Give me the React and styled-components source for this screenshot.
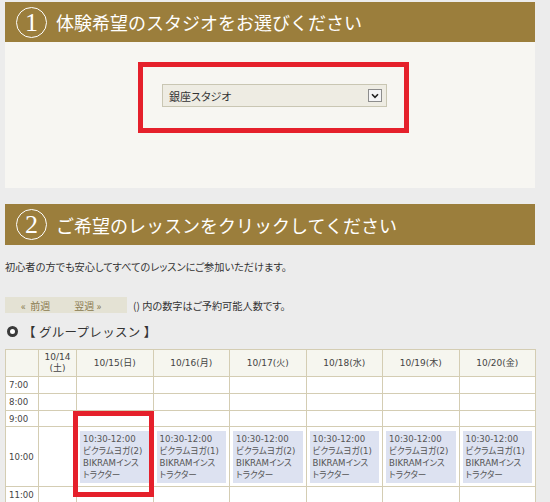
import React from "react";
import styled, { createGlobalStyle } from "styled-components";

const Global = createGlobalStyle`
  html, body { margin: 0; padding: 0; background: #ececec; }
  body { font-family: "Noto Sans CJK JP", sans-serif; color: #333; }
  * { box-sizing: border-box; }
`;

const Page = styled.div`
  width: 550px;
  padding: 2px 15px 0 5px;
`;

const SectionHeader = styled.div`
  display: flex;
  align-items: center;
  height: ${(p) => (p.$tall ? 41 : 40)}px;
  margin-top: ${(p) => p.$mt || 0}px;
  padding-left: 11px;
  background: #9b7e3c;
  color: #fff;
`;

const NumCircle = styled.span`
  display: flex;
  align-items: center;
  justify-content: center;
  width: 31px;
  height: 31px;
  border: 1.5px solid #fff;
  border-radius: 50%;
  font-family: "Liberation Serif", serif;
  font-size: 26px;
  line-height: 1;
  padding-top: 1px;
`;

const Title = styled.h2`
  margin: 0 0 0 9px;
  font-family: "Noto Sans CJK JP", sans-serif;
  font-weight: 400;
  font-size: 18px;
  letter-spacing: 0;
  line-height: 1;
`;

const StudioPanel = styled.div`
  height: 146px;
  padding: 20px 0 0 133px;
  background: #f7f6f2;
`;

const Highlight = styled.div`
  display: inline-block;
  border: 5px solid #e5202b;
  padding: 17px 17px 21px 19px;
`;

const SelectBox = styled.div`
  display: flex;
  align-items: center;
  justify-content: space-between;
  width: 225px;
  height: 23px;
  padding: 0 4px 0 6px;
  background: #eeece3;
  border: 1px solid #c9c6b3;
  font-size: 11px;
  font-feature-settings: "palt";
  color: #333;
`;

const ArrowBox = styled.span`
  display: flex;
  align-items: center;
  justify-content: center;
  width: 14px;
  height: 13px;
  border: 1px solid #8d8d8d;
  background: #f4f4f6;
`;

const Lead = styled.p`
  margin: 16px 0 0;
  font-size: 10.2px;
  line-height: 12px;
  font-feature-settings: "palt";
  color: #333;
`;

const NavRow = styled.div`
  display: flex;
  align-items: center;
  margin-top: 24px;
`;

const WeekNav = styled.div`
  display: flex;
  align-items: center;
  width: 122px;
  height: 16px;
  padding-left: 16px;
  gap: 24px;
  background: #e4e2d4;
`;

const NavLink = styled.span`
  font-size: 10px;
  color: #8a7a4e;
  font-feature-settings: "palt";
  white-space: nowrap;
`;

const Note = styled.span`
  margin-left: 6px;
  font-size: 10.2px;
  font-feature-settings: "palt";
  color: #333;
`;

const GroupTitle = styled.div`
  display: flex;
  align-items: center;
  height: 14px;
  margin-top: 11px;
  padding-left: 2px;
  font-size: 12.5px;
  color: #333;
  letter-spacing: 0.3px;
`;

const Radio = styled.span`
  width: 11px;
  height: 11px;
  margin-right: 5px;
  border-radius: 50%;
  border: 3.5px solid #3a3a3a;
  background: #fff;
`;

const TableWrap = styled.div`
  position: relative;
  margin-top: 11px;
`;

const Schedule = styled.table`
  width: 530px;
  table-layout: fixed;
  border-collapse: collapse;
  font-family: "DejaVu Sans", "Noto Sans CJK JP", sans-serif;
  font-feature-settings: "palt";
  color: #444;
`;

const HeadCell = styled.th`
  height: 27px;
  border: 1px solid #d4cdb3;
  background: #f6f6ef;
  font-weight: 400;
  font-size: 9px;
  line-height: 11px;
  text-align: center;
  padding: 0;
`;

const TimeCell = styled.td`
  height: ${(p) => p.$h}px;
  border: 1px solid #d4cdb3;
  background: #fff;
  font-size: 8.6px;
  padding: 0 0 0 3px;
  vertical-align: middle;
`;

const SlotCell = styled.td`
  height: ${(p) => p.$h}px;
  border: 1px solid #d4cdb3;
  background: #fff;
  padding: 3px;
  vertical-align: middle;
`;

const Lesson = styled.div`
  background: #dde2f1;
  padding: 2px 3px;
  font-size: 8.6px;
  line-height: 12px;
  color: #555;
  white-space: nowrap;
  overflow: hidden;
`;

const Callout = styled.div`
  position: absolute;
  left: 68px;
  top: 62px;
  width: 81px;
  height: 86px;
  border: 5px solid #e5202b;
  pointer-events: none;
`;

const days = ["10/15(日)", "10/16(月)", "10/17(火)", "10/18(水)", "10/19(木)", "10/20(金)"];
const counts = [2, 1, 2, 1, 2, 1];
const hours = [
  { t: "7:00", h: 17 },
  { t: "8:00", h: 17 },
  { t: "9:00", h: 16 },
  { t: "10:00", h: 60, lesson: true },
  { t: "11:00", h: 17 },
];

export default function App() {
  return (
    <>
      <Global />
      <Page>
        <SectionHeader>
          <NumCircle>1</NumCircle>
          <Title>体験希望のスタジオをお選びください</Title>
        </SectionHeader>
        <StudioPanel>
          <Highlight>
            <SelectBox>
              <span>銀座スタジオ</span>
              <ArrowBox>
                <svg width="8" height="6" viewBox="0 0 8 6">
                  <path d="M1 1.2 L4 4.3 L7 1.2" fill="none" stroke="#222" strokeWidth="1.6" />
                </svg>
              </ArrowBox>
            </SelectBox>
          </Highlight>
        </StudioPanel>

        <SectionHeader $tall $mt={16}>
          <NumCircle>2</NumCircle>
          <Title>ご希望のレッスンをクリックしてください</Title>
        </SectionHeader>

        <Lead>初心者の方でも安心してすべてのレッスンにご参加いただけます。</Lead>

        <NavRow>
          <WeekNav>
            <NavLink>«&nbsp;&nbsp;前週</NavLink>
            <NavLink>翌週&nbsp;»</NavLink>
          </WeekNav>
          <Note>() 内の数字はご予約可能人数です。</Note>
        </NavRow>

        <GroupTitle>
          <Radio />【 グループレッスン 】
        </GroupTitle>

        <TableWrap>
          <Schedule>
            <colgroup>
              <col style={{ width: 33 }} />
              <col style={{ width: 38 }} />
              {days.map((d) => (
                <col key={d} style={{ width: 76.5 }} />
              ))}
            </colgroup>
            <thead>
              <tr>
                <HeadCell />
                <HeadCell>
                  10/14
                  <br />
                  (土)
                </HeadCell>
                {days.map((d) => (
                  <HeadCell key={d}>{d}</HeadCell>
                ))}
              </tr>
            </thead>
            <tbody>
              {hours.map((row) => (
                <tr key={row.t}>
                  <TimeCell $h={row.h}>{row.t}</TimeCell>
                  <SlotCell $h={row.h} />
                  {days.map((d, i) => (
                    <SlotCell key={d} $h={row.h}>
                      {row.lesson && (
                        <Lesson>
                          10:30-12:00
                          <br />
                          ビクラムヨガ({counts[i]})
                          <br />
                          BIKRAMインス
                          <br />
                          トラクター
                        </Lesson>
                      )}
                    </SlotCell>
                  ))}
                </tr>
              ))}
            </tbody>
          </Schedule>
          <Callout />
        </TableWrap>
      </Page>
    </>
  );
}
